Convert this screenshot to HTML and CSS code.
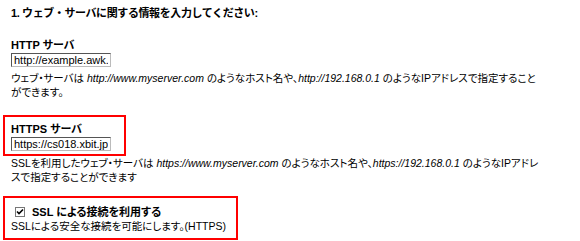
FILE: index.html
```html
<!DOCTYPE html>
<html lang="ja">
<head>
  <meta charset="UTF-8">
  <title>ウェブ・サーバの設定</title>
  <link rel="stylesheet" href="styles.css">
</head>
<body>

<div class="page">
  <p class="step">1. ウェブ・サーバに関する情報を入力してください:</p>

  <div class="field">
    <label class="field-label" for="httpUrl">HTTP サーバ</label>
    <input id="httpUrl" class="url" type="text" value="http://example.awk.com/">
  </div>
  <p class="hint">ウェブ・サーバは <i>http://www.myserver.com</i> のようなホスト名や、<i>http://192.168.0.1</i> のようなIPアドレスで指定すること<br>ができます。</p>

  <div class="field marked field-https">
    <label class="field-label" for="httpsUrl">HTTPS サーバ</label>
    <input id="httpsUrl" class="url" type="text" value="https://cs018.xbit.jp/">
  </div>
  <p class="hint hint-https">SSLを利用したウェブ・サーバは <i>https://www.myserver.com</i> のようなホスト名や、<i>https://192.168.0.1</i> のようなIPアドレ<br>スで指定することができます</p>

  <div class="marked ssl">
    <label class="check">
      <span class="box">
        <svg width="8" height="8" viewBox="0 0 8 8"><path d="M1 3.5 L3 5.5 L7 1.5" fill="none" stroke="#000" stroke-width="1.6"/></svg>
      </span>
      SSL による接続を利用する
    </label>
    <p class="check-note">SSLによる安全な接続を可能にします。(HTTPS)</p>
  </div>
</div>

</body>
</html>
```

FILE: styles.css
```css
body {
  margin: 0;
  background: #fff;
  color: #000;
  font-family: "Liberation Sans", "Noto Sans CJK JP", sans-serif;
  font-size: 11px;
  line-height: 14px;
  font-feature-settings: "palt";
}

.page {
  padding: 6px 0 0 3px;
}

p {
  margin: 0;
}

.step {
  padding-left: 8px;
  font-weight: bold;
  font-feature-settings: normal;
  letter-spacing: -0.4px;
}

.field {
  margin-top: 18px;
  padding-left: 8px;
}

.field-label {
  display: block;
  font-weight: bold;
}

.url {
  display: block;
  box-sizing: border-box;
  width: 100px;
  height: 14px;
  margin: 1px 0 0 0;
  padding: 0 2px;
  border: 1px solid;
  border-color: #555 #bbb #bbb #555;
  font-family: inherit;
  font-size: 11px;
  line-height: 12px;
  color: #000;
  background: #fff;
}

.hint {
  margin-top: 4px;
  padding-left: 8px;
  font-size: 10.5px;
  white-space: nowrap;
}

.marked {
  border: 2px solid #f00;
  box-sizing: border-box;
}

.field-https {
  width: 123px;
  margin-top: 16px;
  padding: 5px 0 3px 6px;
}

.hint-https {
  margin-top: 0;
}

.ssl {
  width: 235px;
  margin-top: 12px;
  padding: 7px 0 5px 6px;
}

.check {
  display: flex;
  align-items: center;
  gap: 7px;
  padding-left: 4px;
  font-weight: bold;
}

.box {
  display: inline-flex;
  align-items: center;
  justify-content: center;
  width: 10px;
  height: 10px;
  box-sizing: border-box;
  border: 1px solid #777;
  background: #fff;
}

.check-note {
  font-size: 10.5px;
  white-space: nowrap;
}
```
